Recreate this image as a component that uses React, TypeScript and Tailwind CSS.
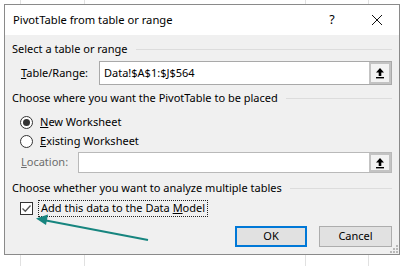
import React from 'react';

// Excel "PivotTable from table or range" dialog over a sheet grid

const font = { fontFamily: '"Segoe UI", "Noto Sans", sans-serif' };

const UploadButton: React.FC = () => (
  <div className="w-[22px] h-full border-2 border-[#c3c3c3] bg-[#f3f3f3] flex items-center justify-center">
    <svg width="10" height="12" viewBox="0 0 10 12">
      <path d="M5 1 L9 5.5 L6.3 5.5 L6.3 9 L3.7 9 L3.7 5.5 L1 5.5 Z" fill="#000" />
      <rect x="1" y="10" width="8" height="1.4" fill="#000" />
    </svg>
  </div>
);

const SectionHeader: React.FC<{ text: string; mt: string }> = ({ text, mt }) => (
  <div className={`flex items-center h-[16px] ${mt}`}>
    <span className="whitespace-nowrap">{text}</span>
    <div className="flex-1 h-px bg-[#dcdcdc] ml-[8px]" />
  </div>
);

const Radio: React.FC<{ checked?: boolean }> = ({ checked }) => (
  <div className="w-[13px] h-[13px] rounded-full border border-[#333] bg-white flex items-center justify-center">
    {checked && <div className="w-[7px] h-[7px] rounded-full bg-[#333]" />}
  </div>
);

export default function App() {
  const cols = [20, 84, 305, 368];
  return (
    <div className="relative w-[405px] h-[266px] bg-white overflow-hidden text-[11px] text-black" style={font}>
      {/* sheet grid behind the dialog */}
      {cols.map(x => (
        <div key={x} className="absolute top-0 bottom-0 w-px bg-[#e1e1e1]" style={{ left: x }} />
      ))}

      <div className="relative ml-[4px] mt-[4px] w-[396px] h-[251px] border border-[#8a8a8a] bg-[#f0f0f0] flex flex-col">
        {/* title bar */}
        <div className="h-[30px] bg-white flex items-center pl-[8px] shrink-0">
          <span className="flex-1 text-[11.2px]">PivotTable from table or range</span>
          <span className="w-[10px] text-center mr-[34px] text-[12.5px]">?</span>
          <svg width="12" height="12" viewBox="0 0 12 12" className="mr-[16px]">
            <path d="M1 1 L11 11 M11 1 L1 11" stroke="#111" strokeWidth="1" />
          </svg>
        </div>

        <div className="px-[7px] flex flex-col">
          <SectionHeader text="Select a table or range" mt="mt-[6px]" />

          <div className="flex items-center h-[24px] mt-[4px] pl-[9px]">
            <span className="w-[78px]"><u>T</u>able/Range:</span>
            <div className="flex-1 h-full border border-[#a9a9a9] bg-white flex items-center">
              <span className="flex-1 pl-[4px]">Data!$A$1:$J$564</span>
              <UploadButton />
            </div>
          </div>

          <SectionHeader text="Choose where you want the PivotTable to be placed" mt="mt-[5px]" />

          <div className="flex items-center h-[16px] mt-[8px] pl-[8px] gap-[7px]">
            <Radio checked />
            <span><u>N</u>ew Worksheet</span>
          </div>
          <div className="flex items-center h-[16px] mt-[3px] pl-[8px] gap-[7px]">
            <Radio />
            <span><u>E</u>xisting Worksheet</span>
          </div>

          <div className="flex items-center h-[21px] mt-[3px] pl-[9px]">
            <span className="w-[57px] text-[#6d6d6d]"><u>L</u>ocation:</span>
            <div className="flex-1 h-full border border-[#b9b9b9] bg-white flex justify-end">
              <UploadButton />
            </div>
          </div>

          <SectionHeader text="Choose whether you want to analyze multiple tables" mt="mt-[7px]" />

          <div className="flex items-center h-[17px] mt-[4px] pl-[8px] gap-[5px]">
            <div className="w-[13px] h-[13px] border border-[#333] bg-white flex items-center justify-center">
              <svg width="11" height="11" viewBox="0 0 11 11">
                <path d="M1.5 5.5 L4.3 8.3 L9.5 2.5" stroke="#555" strokeWidth="1.3" fill="none" />
              </svg>
            </div>
            <span className="h-full px-[2px] border border-dotted border-[#222] flex items-center whitespace-pre">
              Add this data to the Data <u>M</u>odel
            </span>
          </div>

          <div className="flex justify-end gap-[12px] h-[21px] mt-[9px]">
            <button className="w-[72px] h-full border-2 border-[#0078d7] bg-[#e1e1e1]">OK</button>
            <button className="w-[73px] h-full border border-[#adadad] bg-[#e1e1e1]">Cancel</button>
          </div>
        </div>

        {/* resize grip */}
        <svg width="8" height="8" viewBox="0 0 8 8" className="absolute right-[1px] bottom-[1px]">
          {[[6, 0], [6, 3], [3, 3], [6, 6], [3, 6], [0, 6]].map(([x, y]) => (
            <rect key={`${x}-${y}`} x={x} y={y} width="2" height="2" fill="#b8b8b8" />
          ))}
        </svg>
      </div>

      {/* annotation arrow */}
      <svg width="405" height="266" className="absolute left-0 top-0 pointer-events-none">
        <line x1="148" y1="240" x2="46" y2="220.5" stroke="#17857f" strokeWidth="2" />
        <path d="M36 218.5 L48 214.5 L46 225 Z" fill="#17857f" />
      </svg>
    </div>
  );
}
